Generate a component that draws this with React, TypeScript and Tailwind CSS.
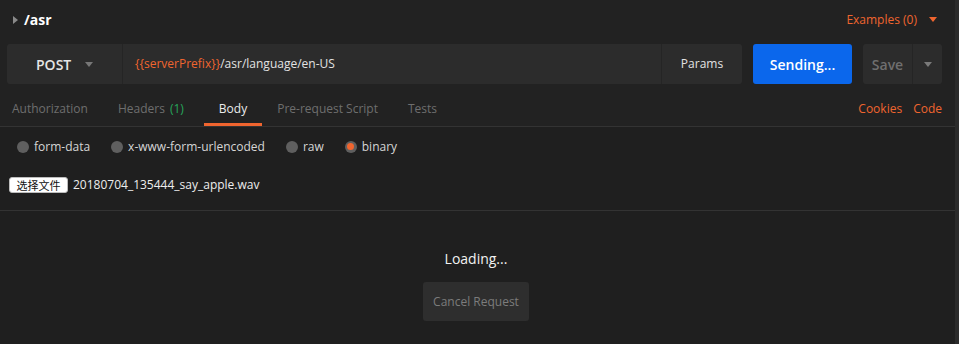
import React from "react";

const orange = "text-[#f0652f]";

function Caret({ className = "" }: { className?: string }) {
    return (
        <svg width="8" height="5" viewBox="0 0 8 5" className={className}>
            <path d="M0 0 L8 0 L4 5 Z" fill="currentColor" />
        </svg>
    );
}

function Radio({ label, checked = false }: { label: string; checked?: boolean }) {
    return (
        <div className="flex items-center gap-[5px]">
            <div className="flex h-[12px] w-[12px] items-center justify-center rounded-full bg-[#5f5f5f]">
                {checked && <div className="h-[7px] w-[7px] rounded-full bg-[#f0652f]" />}
            </div>
            <span className="text-[12px] text-[#d6d6d6]">{label}</span>
        </div>
    );
}

export default function App() {
    const tabs = ["Authorization", "Headers", "Body", "Pre-request Script", "Tests"];

    return (
        <div className="flex h-[344px] w-[959px] overflow-hidden bg-[#1f1f1f] font-['Open_Sans','Liberation_Sans',sans-serif]">
            <div className="flex w-[955px] flex-col">
                <div className="bg-[#222222] pr-[10px]">
                    {/* title row */}
                    <div className="flex h-[39px] items-center pl-[13px] pr-[8px]">
                        <svg width="5" height="8" viewBox="0 0 5 8" className="text-[#8a8a8a]">
                            <path d="M0 0 L5 4 L0 8 Z" fill="currentColor" />
                        </svg>
                        <span className="ml-[6px] text-[14px] font-bold text-white">/asr</span>
                        <div className={`ml-auto flex items-center gap-[12px] text-[12px] ${orange}`}>
                            <span>Examples (0)</span>
                            <Caret className="text-[#f0652f]" />
                        </div>
                    </div>

                    {/* request bar */}
                    <div className="ml-[7px] mt-[5px] flex h-[40px]">
                        <div className="flex w-[735px] rounded-[3px] bg-[#2c2c2c]">
                            <div className="flex w-[116px] items-center border-r border-[#252525] pl-[29px]">
                                <span className="text-[14px] font-semibold text-[#e6e6e6]">POST</span>
                                <Caret className="ml-[14px] text-[#777777]" />
                            </div>
                            <div className="flex flex-1 items-center pl-[12px] text-[12px] text-[#e2e2e2]">
                                <span className={orange}>{"{{serverPrefix}}"}</span>
                                <span>/asr/language/en-US</span>
                            </div>
                            <div className="flex w-[81px] items-center justify-center border-l border-[#252525] text-[12px] text-[#e2e2e2]">
                                Params
                            </div>
                        </div>
                        <div className="ml-[11px] flex w-[99px] items-center justify-center rounded-[3px] bg-[#0b67ec] text-[14px] font-semibold text-white">
                            Sending...
                        </div>
                        <div className="ml-[11px] flex w-[79px] rounded-[3px] bg-[#2c2c2c]">
                            <div className="flex w-[50px] items-center justify-center border-r border-[#252525] text-[14px] font-semibold text-[#6f6f6f]">
                                Save
                            </div>
                            <div className="flex flex-1 items-center justify-center">
                                <Caret className="text-[#7a7a7a]" />
                            </div>
                        </div>
                    </div>

                    {/* tabs */}
                    <div className="flex h-[42px] items-stretch pl-[12px] pr-[3px] text-[12px]">
                        {tabs.map((t, i) => (
                            <div
                                key={t}
                                className={`flex items-center ${i === 0 ? "pr-[15px]" : t === "Headers" ? "pl-[15px] pr-[20px]" : "px-[15px]"} ${
                                    t === "Body" ? "border-b-[3px] border-[#f0652f] pt-[11px] text-[#ececec]" : "pt-[8px] text-[#6e6e6e]"
                                }`}
                            >
                                {t}
                                {t === "Headers" && <span className="ml-[5px] text-[#26a65b]">(1)</span>}
                            </div>
                        ))}
                        <div className={`ml-auto flex items-center gap-[11px] pt-[8px] ${orange}`}>
                            <span>Cookies</span>
                            <span>Code</span>
                        </div>
                    </div>
                </div>

                <div className="border-t border-[#333333] pr-[2px]">
                    <div className="flex h-[39px] items-center gap-[21px] pl-[17px]">
                        <Radio label="form-data" />
                        <Radio label="x-www-form-urlencoded" />
                        <Radio label="raw" />
                        <Radio label="binary" checked />
                    </div>
                    <div className="flex h-[44px] items-start pl-[9px] pt-[11px]">
                        <div className="flex h-[16px] w-[59px] items-center justify-center rounded-[3px] border border-[#bdbdbd] bg-white text-[11px] text-[#111111] font-['Noto_Sans_CJK_SC',sans-serif]">
                            选择文件
                        </div>
                        <span className="ml-[5px] text-[12px] leading-[16px] text-[#ededed]">20180704_135444_say_apple.wav</span>
                    </div>
                </div>

                <div className="flex flex-1 flex-col items-center border-t border-[#333333] pr-[3px] pt-[37px]">
                    <span className="text-[14px] text-[#f2f2f2]">Loading...</span>
                    <div className="mt-[13px] flex h-[39px] w-[106px] items-center justify-center rounded-[3px] bg-[#2e2e2e] text-[12px] text-[#7c7c7c]">
                        Cancel Request
                    </div>
                </div>
            </div>
            <div className="w-[4px] bg-[#2b2b2b]" />
        </div>
    );
}
